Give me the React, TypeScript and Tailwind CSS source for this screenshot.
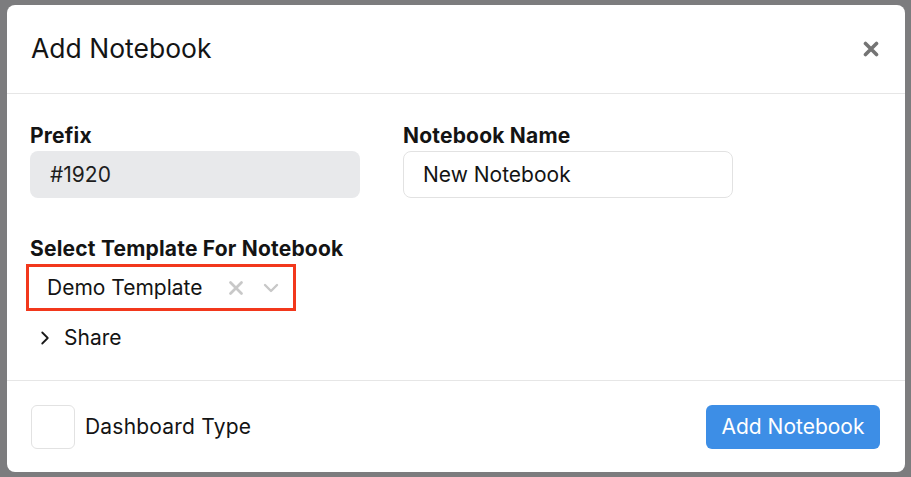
import { X, ChevronDown, ChevronRight } from 'lucide-react';

const App = () => {
  return (
    <div
      className="flex h-[477px] w-[911px] bg-[#7c7c7e] pt-[5px] pr-[6px] pb-[5px] pl-[7px] text-[#141414]"
      style={{ fontFamily: 'Inter, "Liberation Sans", sans-serif' }}
    >
      <div className="flex flex-1 flex-col overflow-hidden rounded-lg bg-white">
        {/* header */}
        <div className="flex h-[89px] shrink-0 items-center justify-between border-b border-[#e6e6e6] pr-[26px] pl-[24px]">
          <h2 className="text-[26.5px] font-normal">Add Notebook</h2>
          <svg width="16" height="16" viewBox="0 0 16 16" className="text-[#747474]">
            <path d="M2.5 2.5 L13.5 13.5 M13.5 2.5 L2.5 13.5" stroke="currentColor" strokeWidth="3.6" strokeLinecap="round" />
          </svg>
        </div>

        {/* body */}
        <div className="flex-1 pt-[30px] pl-[23px]">
          <div className="flex gap-[43px]">
            <div className="flex w-[330px] flex-col gap-[3px]">
              <label className="text-[21px] leading-[24px] font-bold tracking-[0.2px]">Prefix</label>
              <div className="flex h-[47px] items-center rounded-lg bg-[#e8e9eb] px-[20px] text-[21px] text-[#1d1d1d]">
                #1920
              </div>
            </div>
            <div className="flex w-[330px] flex-col gap-[3px]">
              <label className="text-[21px] leading-[24px] font-bold tracking-[0.2px]">Notebook Name</label>
              <div className="flex h-[47px] items-center rounded-lg border border-[#e2e2e2] bg-white px-[19px] text-[21px]">
                New Notebook
              </div>
            </div>
          </div>

          <div className="mt-[39px] flex flex-col">
            <label className="text-[21px] leading-[24px] font-bold tracking-[0.2px]">Select Template For Notebook</label>
            <div className="mt-[3px] -ml-[4px] flex h-[47px] w-[270px] items-center border-[3px] border-[#f2381c] pr-[10px] pl-[18px]">
              <span className="flex-1 text-[21px]">Demo Template</span>
              <X size={22} strokeWidth={3} className="text-[#c8c8c8]" />
              <ChevronDown size={24} strokeWidth={2.4} className="ml-[12px] text-[#c8c8c8]" />
            </div>
            <div className="mt-[15px] flex items-center gap-[8px] pl-[4px]">
              <ChevronRight size={22} strokeWidth={2} className="text-[#1a1a1a]" />
              <span className="text-[21px] leading-[24px]">Share</span>
            </div>
          </div>
        </div>

        {/* footer */}
        <div className="flex h-[92px] shrink-0 items-center justify-between border-t border-[#e6e6e6] pr-[25px] pl-[24px]">
          <div className="flex items-center gap-[10px]">
            <div className="h-[44px] w-[44px] rounded-md border border-[#e2e2e2] bg-white" />
            <span className="text-[21px] tracking-[0.2px]">Dashboard Type</span>
          </div>
          <button className="h-[44px] w-[174px] rounded-md bg-[#3d8ee6] text-[21px] text-white">
            Add Notebook
          </button>
        </div>
      </div>
    </div>
  );
};

export default App;
